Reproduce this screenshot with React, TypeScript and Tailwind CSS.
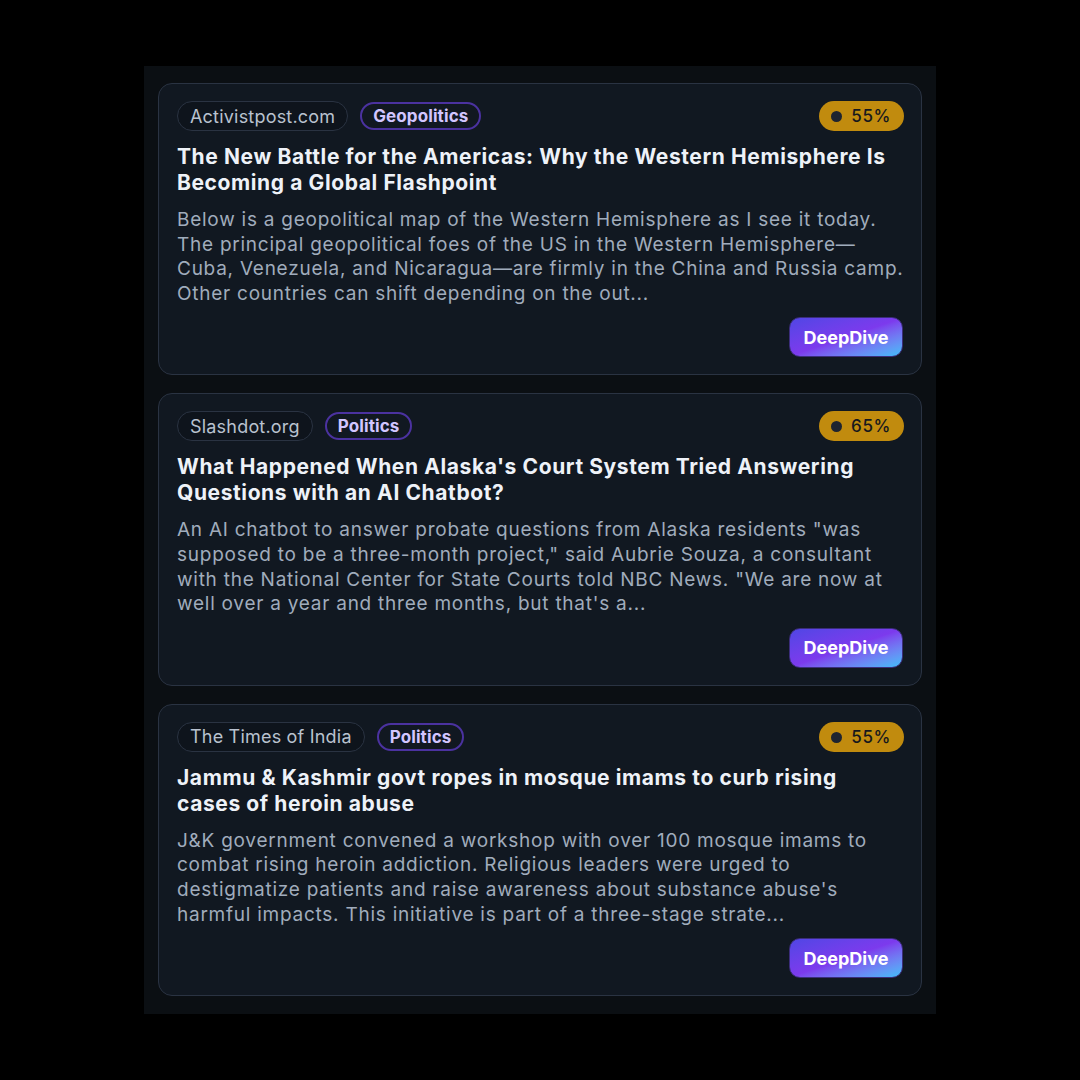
const items = [
  {
    source: "Activistpost.com",
    tag: "Geopolitics",
    score: 55,
    title: "The New Battle for the Americas: Why the Western Hemisphere Is Becoming a Global Flashpoint",
    summary:
      "Below is a geopolitical map of the Western Hemisphere as I see it today. The principal geopolitical foes of the US in the Western Hemisphere—Cuba, Venezuela, and Nicaragua—are firmly in the China and Russia camp. Other countries can shift depending on the out...",
  },
  {
    source: "Slashdot.org",
    tag: "Politics",
    score: 65,
    title: "What Happened When Alaska's Court System Tried Answering Questions with an AI Chatbot?",
    summary:
      "An AI chatbot to answer probate questions from Alaska residents \"was supposed to be a three-month project,\" said Aubrie Souza, a consultant with the National Center for State Courts told NBC News. \"We are now at well over a year and three months, but that's a...",
  },
  {
    source: "The Times of India",
    tag: "Politics",
    score: 55,
    title: "Jammu & Kashmir govt ropes in mosque imams to curb rising cases of heroin abuse",
    summary:
      "J&K government convened a workshop with over 100 mosque imams to combat rising heroin addiction. Religious leaders were urged to destigmatize patients and raise awareness about substance abuse's harmful impacts. This initiative is part of a three-stage strate...",
  },
]

function Card({ item }: { item: (typeof items)[number] }) {
  return (
    <div className="rounded-[14px] border border-[#2a3342] bg-[#111821] px-[18px] pt-[17px] pb-[17px]">
      <div className="flex items-center justify-between">
        <div className="flex items-center gap-3">
          <span className="h-[30px] flex items-center rounded-full border border-[#2a3342] bg-[#0e141c] px-3 text-[18px] tracking-[0.2px] text-[#b9c2cf]">
            {item.source}
          </span>
          <span className="h-[28px] flex items-center rounded-full border-2 border-[#4b32a0] px-[11px] pt-[1px] text-[17px] font-bold tracking-[0.1px] text-[#d2c6ff]">
            {item.tag}
          </span>
        </div>
        <span className="h-[30px] -mr-[1px] flex items-center gap-[9px] rounded-full bg-[#c18b0e] pl-[12px] pr-[13px] pt-[1px] text-[17px] font-medium tracking-[0.6px] text-[#16181d]">
          <span className="w-[11px] h-[11px] rounded-full bg-[#1e2430]" />
          {item.score}%
        </span>
      </div>
      <h2 className="mt-[13px] text-[21px] leading-[26px] font-bold tracking-[0.6px] text-[#eef2f8] pr-3">
        {item.title}
      </h2>
      <p className="mt-[12px] -mr-[6px] text-[19px] leading-[24.6px] tracking-[0.75px] text-[#a0acbc]">
        {item.summary}
      </p>
      <div className="mt-[11px] flex justify-end">
        <button className="h-[40px] w-[114px] rounded-[11px] border border-[#3b2d7a] bg-gradient-to-br from-[#4f46e5] via-[#7c3aed] to-[#38bdf8] text-[18px] font-bold text-white">
          DeepDive
        </button>
      </div>
    </div>
  )
}

export default function App() {
  return (
    <div
      className="w-[1080px] h-[1080px] bg-black flex justify-center pt-[66px]"
      style={{ fontFamily: "Inter, 'Noto Sans', sans-serif" }}
    >
      <div className="w-[792px] h-[948px] bg-[#0b0f13] px-[14px] pt-[17px] flex flex-col gap-[18px]">
        {items.map((item, i) => (
          <Card key={i} item={item} />
        ))}
      </div>
    </div>
  )
}
